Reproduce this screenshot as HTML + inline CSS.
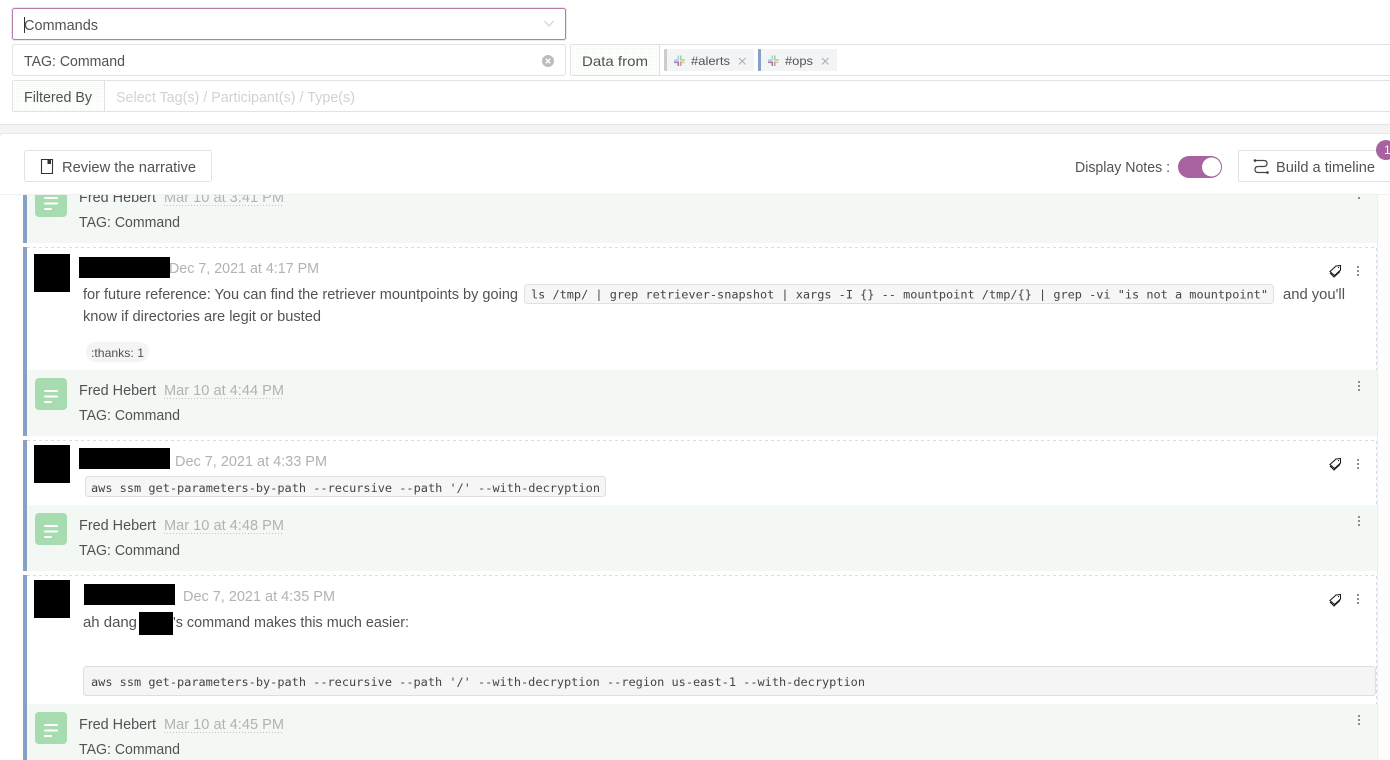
<!DOCTYPE html>
<html><head><meta charset="utf-8"><title>Commands</title>
<style>
html,body{margin:0;padding:0;background:#fff;width:1390px;height:760px;overflow:hidden}
svg{display:block}
text{font-family:"Liberation Sans",sans-serif;font-size:14.5px;fill:#525252}
.g{fill:#b2b2b2}
.s{font-size:12px}
.m{font-family:"DejaVu Sans Mono","Liberation Mono",monospace;font-size:11.9px;fill:#444}
.b{fill:none;stroke:#e2e2e2}
.d{fill:none;stroke:#dcdcdc;stroke-dasharray:3 3}
</style></head><body>
<svg width="1390" height="760" viewBox="0 0 1390 760" xmlns="http://www.w3.org/2000/svg">
<defs>
<pattern id="dot" width="2" height="2" patternUnits="userSpaceOnUse"><rect width="2" height="2" fill="#fff"/><rect width="1" height="1" fill="#f2f5f2"/></pattern>
<g id="ic"><rect width="32" height="32" rx="4" fill="#a6dcb0"/><rect x="9" y="12" width="14" height="2" rx="1" fill="#fff"/><rect x="9" y="17.500" width="14" height="2" rx="1" fill="#fff"/><rect x="9" y="23" width="8" height="2" rx="1" fill="#fff"/></g>
<g id="kb"><rect x="-1" y="-5" width="2" height="2" fill="#8e8e8e"/><rect x="-1" y="-1" width="2" height="2" fill="#8e8e8e"/><rect x="-1" y="3" width="2" height="2" fill="#8e8e8e"/></g>
<g id="tg" fill="none" stroke="#1c1c1c" stroke-width="1.100"><path d="M-5.500 2 L-1.500 6 L4.500 .5"/><path d="M-5.500 .5 L.5 -5 L5 -5.500 L5 -1 L-1 4.500 Z" fill="#fff"/><circle cx="3" cy="-3.500" r=".6" fill="#1c1c1c" stroke="none"/></g>
<g id="sl" opacity=".75"><rect x="0" y="4" width="4" height="1.600" fill="#7ec8d8"/><rect x="3.500" y="0" width="1.600" height="5" fill="#8cc8dc"/><rect x="6" y="0" width="1.600" height="4" fill="#8cc98e"/><rect x="6" y="3.500" width="5" height="1.600" fill="#9cc88e"/><rect x="6" y="6" width="4.500" height="1.600" fill="#d8b860"/><rect x="6" y="6" width="1.600" height="4.500" fill="#d07a90"/><rect x="0" y="6" width="5" height="1.600" fill="#a8508a"/><rect x="3.500" y="6.500" width="1.600" height="4" fill="#8d4a8c"/></g>
</defs>
<rect width="1390" height="760" fill="#fff"/>
<rect x="1377" y="195" width="13" height="565" fill="#fdfdfd"/>
<rect x="1377" y="195" width="1" height="565" fill="#eeeeee"/>

<!-- feed backgrounds -->
<rect x="23" y="185" width="4" height="58" fill="#86a1c8"/>
<rect x="27" y="185" width="1350" height="58" fill="#f3f8f5"/>
<rect x="23" y="247" width="4" height="189" fill="#86a1c8"/>
<path class="d" d="M27 247.500H1376.500V370"/>
<rect x="27" y="370" width="1350" height="66" fill="#f3f8f5"/>
<rect x="23" y="440" width="4" height="131" fill="#86a1c8"/>
<path class="d" d="M27 440.500H1376.500V505"/>
<rect x="27" y="505" width="1350" height="66" fill="#f3f8f5"/>
<rect x="23" y="575" width="4" height="185" fill="#86a1c8"/>
<path class="d" d="M27 575.500H1376.500V704"/>
<rect x="27" y="704" width="1350" height="56" fill="#f3f8f5"/>

<!-- row 0 -->
<use href="#ic" x="35" y="185"/>
<text x="79" y="202" textLength="77" lengthAdjust="spacingAndGlyphs">Fred Hebert</text>
<text class="g" x="164" y="202" textLength="120" lengthAdjust="spacingAndGlyphs">Mar 10 at 3:41 PM</text>
<path d="M164 205.500H284" stroke="#c4c4c4" stroke-dasharray="1 2"/>
<text x="79" y="227" textLength="101" lengthAdjust="spacingAndGlyphs">TAG: Command</text>
<use href="#kb" x="1359" y="194"/>

<!-- message 1 -->
<rect x="34" y="254" width="36" height="38" fill="#000"/>
<rect x="79" y="257" width="91" height="21" fill="#000"/>
<text class="g" x="169" y="273" textLength="150" lengthAdjust="spacingAndGlyphs">Dec 7, 2021 at 4:17 PM</text>
<use href="#tg" x="1335.500" y="271"/><use href="#kb" x="1358" y="271"/>
<text x="83" y="299" textLength="435" lengthAdjust="spacingAndGlyphs">for future reference: You can find the retriever mountpoints by going</text>
<rect x="524.500" y="284.500" width="749" height="19" rx="3" fill="#f6f6f6" stroke="#e0e0e0"/>
<text class="m" x="531" y="298.500" textLength="737" lengthAdjust="spacingAndGlyphs">ls /tmp/ | grep retriever-snapshot | xargs -I {} -- mountpoint /tmp/{} | grep -vi "is not a mountpoint"</text>
<text x="1283" y="299" textLength="62" lengthAdjust="spacingAndGlyphs">and you'll</text>
<text x="83" y="321" textLength="238" lengthAdjust="spacingAndGlyphs">know if directories are legit or busted</text>
<rect x="86" y="342" width="63" height="20" rx="10" fill="#f3f4f6"/>
<text class="s" x="91" y="357" textLength="53" lengthAdjust="spacingAndGlyphs">:thanks: 1</text>

<!-- note 1 -->
<use href="#ic" x="35" y="378"/>
<text x="79" y="395" textLength="77" lengthAdjust="spacingAndGlyphs">Fred Hebert</text>
<text class="g" x="164" y="395" textLength="120" lengthAdjust="spacingAndGlyphs">Mar 10 at 4:44 PM</text>
<path d="M164 398.500H284" stroke="#c4c4c4" stroke-dasharray="1 2"/>
<text x="79" y="420" textLength="101" lengthAdjust="spacingAndGlyphs">TAG: Command</text>
<use href="#kb" x="1359" y="386"/>

<!-- message 2 -->
<rect x="34" y="445" width="36" height="38" fill="#000"/>
<rect x="79" y="448" width="91" height="21" fill="#000"/>
<text class="g" x="175" y="466" textLength="152" lengthAdjust="spacingAndGlyphs">Dec 7, 2021 at 4:33 PM</text>
<use href="#tg" x="1335.500" y="464"/><use href="#kb" x="1358" y="464"/>
<rect x="85.500" y="476.500" width="520" height="20" rx="3" fill="#f6f6f6" stroke="#e0e0e0"/>
<text class="m" x="91" y="492" textLength="509" lengthAdjust="spacingAndGlyphs">aws ssm get-parameters-by-path --recursive --path '/' --with-decryption</text>

<!-- note 2 -->
<use href="#ic" x="35" y="513"/>
<text x="79" y="530" textLength="77" lengthAdjust="spacingAndGlyphs">Fred Hebert</text>
<text class="g" x="164" y="530" textLength="120" lengthAdjust="spacingAndGlyphs">Mar 10 at 4:48 PM</text>
<path d="M164 533.500H284" stroke="#c4c4c4" stroke-dasharray="1 2"/>
<text x="79" y="555" textLength="101" lengthAdjust="spacingAndGlyphs">TAG: Command</text>
<use href="#kb" x="1359" y="521"/>

<!-- message 3 -->
<rect x="34" y="580" width="36" height="38" fill="#000"/>
<rect x="84" y="584" width="91" height="21" fill="#000"/>
<text class="g" x="183" y="601" textLength="152" lengthAdjust="spacingAndGlyphs">Dec 7, 2021 at 4:35 PM</text>
<use href="#tg" x="1335.500" y="600"/><use href="#kb" x="1358" y="599"/>
<text x="83" y="627" textLength="54" lengthAdjust="spacingAndGlyphs">ah dang</text>
<rect x="139" y="612" width="34" height="23" fill="#000"/>
<text x="173" y="627" textLength="236" lengthAdjust="spacingAndGlyphs">'s command makes this much easier:</text>
<rect x="83.500" y="666.500" width="1292" height="29" rx="3" fill="#f5f5f5" stroke="#dedede"/>
<text class="m" x="91" y="686" textLength="774" lengthAdjust="spacingAndGlyphs">aws ssm get-parameters-by-path --recursive --path '/' --with-decryption --region us-east-1 --with-decryption</text>

<!-- note 3 -->
<use href="#ic" x="35" y="712"/>
<text x="79" y="729" textLength="77" lengthAdjust="spacingAndGlyphs">Fred Hebert</text>
<text class="g" x="164" y="729" textLength="120" lengthAdjust="spacingAndGlyphs">Mar 10 at 4:45 PM</text>
<path d="M164 732.500H284" stroke="#c4c4c4" stroke-dasharray="1 2"/>
<text x="79" y="754" textLength="101" lengthAdjust="spacingAndGlyphs">TAG: Command</text>
<use href="#kb" x="1359" y="720"/>

<!-- top areas -->
<rect x="0" y="0" width="1390" height="195" fill="#fff"/>
<rect x="0" y="124" width="1390" height="10" fill="#f3f4f6"/>
<path d="M0 124.500H1390" stroke="#e4e4e4"/>
<path d="M0 136Q0 133.500 4 133.500H1390" fill="#fff" stroke="#e8e8e8"/>
<rect x="0" y="136" width="1390" height="58" fill="#fff"/>
<path d="M0 194.500H1390" stroke="#f0f0f0"/>

<!-- select -->
<rect x="11.500" y="7.500" width="555" height="33" rx="3" fill="none" stroke="#e9e9e9"/>
<rect x="12.500" y="8.500" width="553" height="31" rx="2" fill="#fff" stroke="#b57cae"/>
<rect x="24" y="17" width="1" height="16" fill="#333"/>
<text x="24" y="30" textLength="74" lengthAdjust="spacingAndGlyphs">Commands</text>
<path d="M544.500 21L549 26L553.500 21" fill="none" stroke="#cccccc"/>

<!-- tag filter -->
<rect class="b" x="12.500" y="44.500" width="553" height="31" rx="2" fill="#fff"/>
<text x="24" y="66" textLength="101" lengthAdjust="spacingAndGlyphs">TAG: Command</text>
<circle cx="548" cy="61" r="6" fill="#bdbdbd"/>
<path d="M545.800 58.800L550.200 63.200M550.200 58.800L545.800 63.200" stroke="#fff" stroke-width="1.400"/>

<!-- data from -->
<path d="M1390 44.500H572Q570.500 44.500 570.500 46V74Q570.500 75.500 572 75.500H1390" fill="#fff" stroke="#e2e2e2"/>
<rect x="571" y="45" width="88" height="30" fill="url(#dot)"/>
<path d="M659.500 45V75" stroke="#e2e2e2"/>
<text x="582" y="66" textLength="66" lengthAdjust="spacingAndGlyphs" style="font-size:14px">Data from</text>
<rect x="664" y="49" width="90" height="22" rx="2" fill="#f3f4f6"/>
<rect x="664" y="49" width="3" height="22" rx="1" fill="#cccccc"/>
<use href="#sl" x="674" y="55.500"/>
<text class="s" x="691" y="65" textLength="39" lengthAdjust="spacingAndGlyphs">#alerts</text>
<path d="M739 58L745.500 64.500M745.500 58L739 64.500" stroke="#aaa" fill="none"/>
<rect x="758" y="49" width="79" height="22" rx="2" fill="#f3f4f6"/>
<rect x="758" y="49" width="3" height="22" rx="1" fill="#86a1c8"/>
<use href="#sl" x="768" y="55.500"/>
<text class="s" x="785" y="65" textLength="28" lengthAdjust="spacingAndGlyphs">#ops</text>
<path d="M822 58L828.500 64.500M828.500 58L822 64.500" stroke="#aaa" fill="none"/>

<!-- filtered by -->
<path d="M1390 80.500H14Q12.500 80.500 12.500 82V110Q12.500 111.500 14 111.500H1390" fill="#fff" stroke="#e2e2e2"/>
<rect x="13" y="81" width="91" height="30" fill="url(#dot)"/>
<path d="M104.500 81V111" stroke="#e2e2e2"/>
<text x="24" y="102" textLength="68" lengthAdjust="spacingAndGlyphs">Filtered By</text>
<text x="116" y="102" textLength="239" lengthAdjust="spacingAndGlyphs" style="fill:#d2d2d2">Select Tag(s) / Participant(s) / Type(s)</text>

<!-- review button -->
<rect class="b" x="24.500" y="150.500" width="187" height="31" rx="2" fill="#fff"/>
<path d="M41.500 159.500H52.500V173.500H41.500Z" fill="none" stroke="#333" stroke-width="1.100"/>
<rect x="47.500" y="159.500" width="3.500" height="4.500" fill="#333"/>
<text x="62" y="172" textLength="134" lengthAdjust="spacingAndGlyphs">Review the narrative</text>

<!-- display notes -->
<text x="1075" y="172" textLength="95" lengthAdjust="spacingAndGlyphs">Display Notes :</text>
<rect x="1178" y="156" width="44" height="22" rx="11" fill="#a7629f"/>
<circle cx="1211.500" cy="167" r="9.500" fill="#fff"/>

<!-- timeline button -->
<path d="M1390 150.500H1240Q1238.500 150.500 1238.500 152V180Q1238.500 181.500 1240 181.500H1390" fill="#fff" stroke="#e2e2e2"/>
<path d="M1255 160.500H1264Q1267 160.500 1267 163.500Q1267 166.500 1264 166.500H1258Q1255 166.500 1255 169.500Q1255 172.500 1258 172.500H1267" fill="none" stroke="#444" stroke-width="1.200"/>
<circle cx="1255" cy="160.500" r="1.300" fill="#333"/><circle cx="1267.500" cy="172.500" r="1.300" fill="#333"/>
<text x="1276" y="172" textLength="99" lengthAdjust="spacingAndGlyphs">Build a timeline</text>
<circle cx="1386" cy="150" r="10" fill="#a7629f"/>
<text class="s" x="1384" y="154" style="fill:#fff">1</text>
</svg>
</body></html>
